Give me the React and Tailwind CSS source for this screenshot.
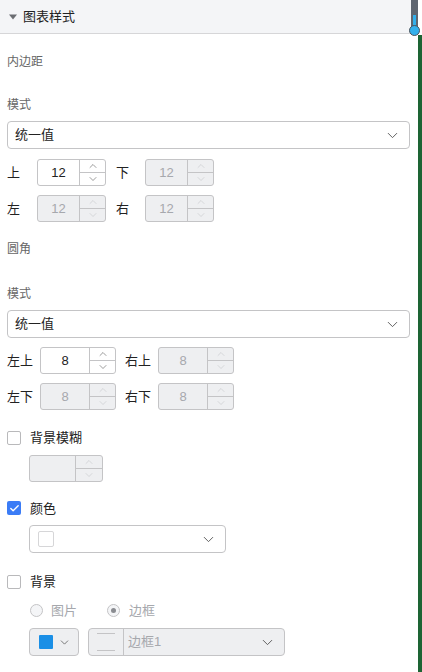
import { ChevronDown, ChevronUp, Check } from 'lucide-react';

const font = { fontFamily: '"Liberation Sans", "Noto Sans CJK SC", sans-serif' };

const Spinner = ({ value, disabled, w = 'w-[69px]', valW = 'w-[41px]' }) => (
  <div
    className={`flex h-[27px] ${w} border border-[#c4c4c6] rounded-[3px] overflow-hidden ${
      disabled ? 'bg-[#eeeff1]' : 'bg-white'
    }`}
  >
    <div
      className={`${valW} flex items-center justify-center text-[13px] ${
        disabled ? 'text-[#a6a8ad]' : 'text-[#222]'
      }`}
    >
      {value}
    </div>
    <div className="flex-1 flex flex-col border-l border-[#c4c4c6]">
      <div className="flex-1 flex items-center justify-center border-b border-[#c4c4c6]">
        <ChevronUp size={12} strokeWidth={1.3} className={disabled ? 'text-[#c8c9cc]' : 'text-[#666]'} />
      </div>
      <div className="flex-1 flex items-center justify-center">
        <ChevronDown size={12} strokeWidth={1.3} className={disabled ? 'text-[#c8c9cc]' : 'text-[#666]'} />
      </div>
    </div>
  </div>
);

const Select = ({ text }) => (
  <div className="ml-[7px] w-[403px] h-[28px] flex items-center justify-between border border-[#c4c4c6] rounded-[4px] bg-white pl-[7px] pr-[8px]">
    <span className="text-[13px] text-[#222]">{text}</span>
    <ChevronDown size={17} strokeWidth={1.3} className="text-[#555]" />
  </div>
);

const Checkbox = ({ checked, label }) => (
  <div className="flex items-center gap-[9px] px-[7px]">
    {checked ? (
      <div className="w-[14px] h-[14px] rounded-[2px] bg-[#3b7cf6] flex items-center justify-center">
        <Check size={11} strokeWidth={3} className="text-white" />
      </div>
    ) : (
      <div className="w-[14px] h-[14px] rounded-[2px] border border-[#b9b9bb] bg-white" />
    )}
    <span className="text-[13px] text-[#222]">{label}</span>
  </div>
);

const App = () => {
  return (
    <div className="relative w-[422px] h-[672px] overflow-hidden bg-white flex" style={font}>
      <div className="w-[418px] flex flex-col">
        <div className="h-[34px] w-[411px] bg-[#f4f5f7] border-b border-[#d6d6d8] flex items-center pl-[9px] gap-[6px]">
          <svg width="8" height="6" viewBox="0 0 8 6">
            <path d="M0 0.5 L8 0.5 L4 5.5 Z" fill="#6b6d72" />
          </svg>
          <span className="text-[13px] text-[#222]">图表样式</span>
        </div>

        <div className="text-[12px] text-[#666] px-[7px] mt-[20px] leading-[16px]">内边距</div>
        <div className="text-[12px] text-[#666] px-[7px] mt-[27px] leading-[16px]">模式</div>
        <div className="mt-[8px]">
          <Select text="统一值" />
        </div>
        <div className="flex items-center px-[7px] mt-[10px]">
          <span className="text-[13px] text-[#222] w-[30px]">上</span>
          <Spinner value="12" />
          <span className="text-[13px] text-[#222] w-[39px] pl-[10px]">下</span>
          <Spinner value="12" disabled />
        </div>
        <div className="flex items-center px-[7px] mt-[9px]">
          <span className="text-[13px] text-[#222] w-[30px]">左</span>
          <Spinner value="12" disabled />
          <span className="text-[13px] text-[#222] w-[39px] pl-[10px]">右</span>
          <Spinner value="12" disabled />
        </div>

        <div className="text-[12px] text-[#666] px-[7px] mt-[19px] leading-[16px]">圆角</div>
        <div className="text-[12px] text-[#666] px-[7px] mt-[29px] leading-[16px]">模式</div>
        <div className="mt-[8px]">
          <Select text="统一值" />
        </div>
        <div className="flex items-center px-[7px] mt-[9px]">
          <span className="text-[13px] text-[#222] w-[33px]">左上</span>
          <Spinner value="8" w="w-[76px]" valW="w-[48px]" />
          <span className="text-[13px] text-[#222] w-[42px] pl-[9px]">右上</span>
          <Spinner value="8" w="w-[76px]" valW="w-[48px]" disabled />
        </div>
        <div className="flex items-center px-[7px] mt-[9px]">
          <span className="text-[13px] text-[#222] w-[33px]">左下</span>
          <Spinner value="8" w="w-[76px]" valW="w-[48px]" disabled />
          <span className="text-[13px] text-[#222] w-[42px] pl-[9px]">右下</span>
          <Spinner value="8" w="w-[76px]" valW="w-[48px]" disabled />
        </div>

        <div className="mt-[18px]">
          <Checkbox label="背景模糊" />
        </div>
        <div className="pl-[29px] mt-[7px]">
          <Spinner value="" w="w-[74px]" valW="w-[45px]" disabled />
        </div>

        <div className="mt-[17px]">
          <Checkbox checked label="颜色" />
        </div>
        <div className="pl-[29px] mt-[7px]">
          <div className="w-[197px] h-[28px] flex items-center justify-between border border-[#c4c4c6] rounded-[4px] bg-white pl-[8px] pr-[8px]">
            <div className="w-[16px] h-[16px] border border-[#d6d6d8] rounded-[2px] bg-white" />
            <ChevronDown size={17} strokeWidth={1.3} className="text-[#555]" />
          </div>
        </div>

        <div className="mt-[19px]">
          <Checkbox label="背景" />
        </div>
        <div className="flex items-center pl-[30px] mt-[9px] text-[13px] text-[#a6a8ad]">
          <div className="w-[13px] h-[13px] rounded-full border border-[#c4c4c6] bg-[#f4f5f7]" />
          <span className="ml-[8px]">图片</span>
          <div className="ml-[30px] w-[13px] h-[13px] rounded-full border border-[#c4c4c6] bg-[#f4f5f7] flex items-center justify-center">
            <div className="w-[5px] h-[5px] rounded-full bg-[#8a8c91]" />
          </div>
          <span className="ml-[9px]">边框</span>
        </div>
        <div className="flex items-center pl-[29px] mt-[8px] gap-[9px]">
          <div className="w-[50px] h-[28px] flex items-center border border-[#c4c4c6] rounded-[4px] bg-[#eeeff1] pl-[9px] gap-[5px]">
            <div className="w-[14px] h-[14px] bg-[#1a8fe6] rounded-[1px]" />
            <ChevronDown size={13} strokeWidth={1.4} className="text-[#555]" />
          </div>
          <div className="w-[197px] h-[28px] flex items-center border border-[#c4c4c6] rounded-[4px] bg-[#eeeff1]">
            <div className="w-[35px] h-full border-r border-[#c4c4c6] flex flex-col justify-between py-[4px] px-[8px]">
              <div className="h-px bg-[#c4c4c6]" />
              <div className="h-px bg-[#c4c4c6]" />
            </div>
            <span className="ml-[4px] text-[13px] text-[#a6a8ad] flex-1">边框1</span>
            <ChevronDown size={17} strokeWidth={1.3} className="text-[#555] mr-[8px]" />
          </div>
        </div>
      </div>

      <div className="w-[4px] flex flex-col">
        <div className="h-[35px]" />
        <div className="flex-1 bg-[#1d6434]" />
      </div>

      <div className="absolute top-0 left-[411px] w-[7px] h-[37px]">
        <div className="w-[7px] h-[32px] bg-[#5f6670] rounded-b-[3px] flex justify-center">
          <div className="w-[3px] h-[16px] mt-[15px] bg-[#33b0ec]" />
        </div>
        <div className="absolute top-[25px] left-[-2px] w-[11px] h-[11px] rounded-full bg-[#33b0ec] border-[1.5px] border-[#4a525b]" />
      </div>
    </div>
  );
};

export default App;
